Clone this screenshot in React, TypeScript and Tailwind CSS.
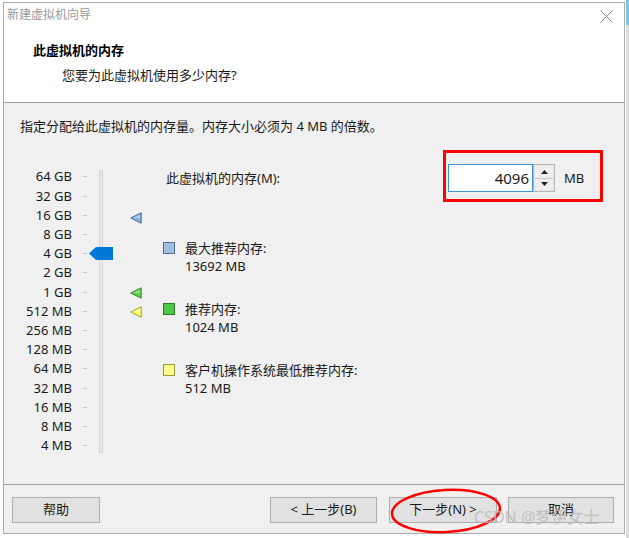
const levels = [
  "64 GB",
  "32 GB",
  "16 GB",
  "8 GB",
  "4 GB",
  "2 GB",
  "1 GB",
  "512 MB",
  "256 MB",
  "128 MB",
  "64 MB",
  "32 MB",
  "16 MB",
  "8 MB",
  "4 MB",
];

function Marker({ fill, stroke }: { fill: string; stroke: string }) {
  return (
    <svg width="12" height="12" viewBox="0 0 12 12">
      <polygon points="0.8,6 11.2,0.8 11.2,11.2" fill={fill} stroke={stroke} strokeWidth="1" />
      <polygon points="3,6 10,2.5 10,6" fill="#ffffff" opacity="0.35" />
    </svg>
  );
}

function Slider() {
  return (
    <div className="relative w-[159px] shrink-0 pt-[3.4px]">
      {levels.map((l) => (
        <div key={l} className="flex h-[19.2px] items-center">
          <span className="w-[68px] text-right text-[13px] leading-none text-[#1a1a1a]">{l}</span>
          <span className="ml-[11px] h-px w-[4px] bg-[#c4c4c4]" />
        </div>
      ))}
      {/* track */}
      <div className="absolute left-[95px] top-[6px] h-[283px] w-[4px] border border-[#d6d6d6] bg-[#e7e7e7]" />
      {/* thumb */}
      <svg className="absolute left-[85px] top-[83px]" width="24" height="13" viewBox="0 0 24 13">
        <polygon points="0,6.5 7,0 24,0 24,13 7,13" fill="#0078d7" />
      </svg>
      <div className="absolute left-[126px] top-[48px]">
        <Marker fill="#8fb0dc" stroke="#3d6aa8" />
      </div>
      <div className="absolute left-[126px] top-[123px]">
        <Marker fill="#5fcf4f" stroke="#2f8a22" />
      </div>
      <div className="absolute left-[126px] top-[142px]">
        <Marker fill="#ffff70" stroke="#a3a31a" />
      </div>
    </div>
  );
}

function Legend({
  fill,
  border,
  label,
  value,
  className,
}: {
  fill: string;
  border: string;
  label: string;
  value: string;
  className: string;
}) {
  return (
    <div className={`flex items-start ${className}`}>
      <span className={`mt-[3px] h-[12px] w-[12px] border ${fill} ${border}`} />
      <div className="ml-[10px] text-[13px] leading-[18px] text-[#1a1a1a]">
        <div>{label}</div>
        <div>{value}</div>
      </div>
    </div>
  );
}

function Button({ label, className }: { label: string; className: string }) {
  return (
    <div
      className={`flex h-[26px] items-center justify-center border border-[#adadad] bg-[#e1e1e1] text-[13px] text-[#1a1a1a] ${className}`}
    >
      {label}
    </div>
  );
}

export default function App() {
  return (
    <div className="flex h-[538px] w-[629px] overflow-hidden bg-white font-['Noto_Sans','Noto_Sans_CJK_SC',sans-serif]">
      <div className="w-[3px] shrink-0" />
      <div className="relative mt-[2px] flex h-[532px] w-[622px] shrink-0 flex-col border border-[#acacac]">
        {/* header */}
        <div className="relative h-[100px] shrink-0 border-b border-[#a0a0a0] bg-white">
          <div className="pl-[3px] pt-[4px] text-[12px] leading-[16px] text-[#9a9a9a]">新建虚拟机向导</div>
          <svg className="absolute right-[11px] top-[7px]" width="13" height="13" viewBox="0 0 13 13">
            <path d="M0.5 0.5 L12.5 12.5 M12.5 0.5 L0.5 12.5" stroke="#8a8a8a" strokeWidth="1" />
          </svg>
          <div className="ml-[29px] mt-[18px] text-[13px] font-bold leading-[18px] text-black">此虚拟机的内存</div>
          <div className="ml-[58px] mt-[7px] text-[13px] leading-[18px] text-[#1a1a1a]">您要为此虚拟机使用多少内存?</div>
        </div>

        {/* body */}
        <div className="h-[382px] shrink-0 border-b border-[#a0a0a0] bg-[#f0f0f0]">
          <div className="pl-[16px] pt-[14px] text-[13px] leading-[18px] text-[#1a1a1a]">
            指定分配给此虚拟机的内存量。内存大小必须为 4 MB 的倍数。
          </div>
          <div className="mt-[29px] flex">
            <Slider />
            <div className="flex flex-col">
              <div className="relative flex h-[28px] items-center">
                <span className="ml-[3px] w-[282px] text-[13px] leading-none text-[#1a1a1a]">此虚拟机的内存(M):</span>
                <div className="flex h-[28px] w-[85px] items-center justify-end border border-[#3c8fd8] bg-white pr-[3px] text-[15px] text-[#1a1a1a]">
                  4096
                </div>
                <div className="flex h-[28px] w-[22px] flex-col border border-[#b5b5b5] bg-[#e6e6e6] p-[1px]">
                  <div className="flex flex-1 items-center justify-center border-b border-[#c8c8c8] bg-[#eeeeee]">
                    <svg width="7" height="4" viewBox="0 0 7 4">
                      <polygon points="0,4 3.5,0 7,4" fill="#222" />
                    </svg>
                  </div>
                  <div className="flex flex-1 items-center justify-center bg-[#eeeeee]">
                    <svg width="7" height="4" viewBox="0 0 7 4">
                      <polygon points="0,0 7,0 3.5,4" fill="#222" />
                    </svg>
                  </div>
                </div>
                <span className="ml-[9px] text-[13px] leading-none text-[#1a1a1a]">MB</span>
                <div className="absolute left-[280px] top-[-14px] h-[52px] w-[160px] border-[3px] border-[#ff0000]" />
              </div>
              <Legend
                className="mt-[47px]"
                fill="bg-[#a3bde0]"
                border="border-[#4a6c9c]"
                label="最大推荐内存:"
                value="13692 MB"
              />
              <Legend
                className="mt-[25px]"
                fill="bg-[#4ec64a]"
                border="border-[#2b7a26]"
                label="推荐内存:"
                value="1024 MB"
              />
              <Legend
                className="mt-[25px]"
                fill="bg-[#ffff8c]"
                border="border-[#9a9a38]"
                label="客户机操作系统最低推荐内存:"
                value="512 MB"
              />
            </div>
          </div>
        </div>

        {/* buttons */}
        <div className="flex flex-1 items-start bg-[#f0f0f0] pt-[12px]">
          <Button label="帮助" className="ml-[8px] w-[88px]" />
          <Button label="< 上一步(B)" className="ml-[170px] w-[107px]" />
          <Button label="下一步(N) >" className="ml-[12px] w-[108px]" />
          <Button label="取消" className="ml-[11px] w-[106px]" />
        </div>

        {/* annotation overlay */}
        <svg className="absolute left-[384px] top-[482px]" width="120" height="52" viewBox="0 0 120 52">
          <ellipse cx="58" cy="26" rx="54" ry="21" fill="none" stroke="#ff0000" strokeWidth="2.5" transform="rotate(-3 58 26)" />
        </svg>
        <div className="absolute left-[470px] top-[504px] text-[16px] leading-[20px] text-[#bdbdbd] opacity-90">
          CSDN @梦伊女士
        </div>
      </div>
      <div className="ml-auto flex w-[3px] flex-col">
        <div className="h-[25px] bg-[#7cc6e6]" />
        <div className="flex-1 bg-[#dcdcdc]" />
      </div>
    </div>
  );
}
